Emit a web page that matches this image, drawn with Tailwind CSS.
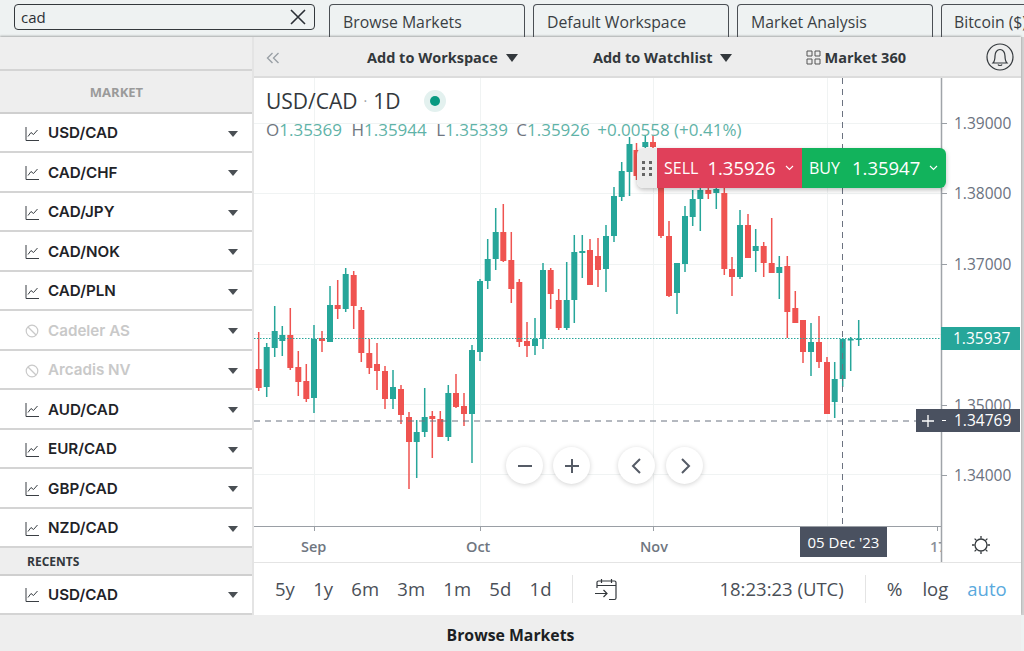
<!DOCTYPE html>
<html lang="en">

<head>
    <meta charset="UTF-8">
    <meta name="viewport" content="width=device-width, initial-scale=1.0">
    <title>Markets</title>
    <script src="https://cdn.jsdelivr.net/npm/@tailwindcss/browser@4"></script>
</head>

<body class="bg-[#eef2f2] font-['Open_Sans',sans-serif] text-[#2b2f36] w-[1024px] h-[651px] overflow-hidden">
    <!-- search + workspace tabs -->
    <div class="h-[37px] flex items-start pt-1 overflow-hidden">
        <div class="ml-[14px] w-[301px] h-[26px] border border-[#33383c] rounded flex items-center justify-between pl-[6px] pr-[7px] text-[15px] shrink-0">
            <span>cad</span>
            <svg width="18" height="18" viewBox="0 0 18 18" fill="none" stroke="#2b2f36" stroke-width="1.6"><path d="M2 2l14 14M16 2L2 16" /></svg>
        </div>
        <div class="ml-[14px] flex gap-2 shrink-0">
            <div class="w-[196px] h-[34px] border border-b-0 border-[#4a4f54] rounded-t-sm pl-[13px] pt-[7px] text-[15.8px] leading-[21px] text-[#3a3f44]">Browse Markets</div>
            <div class="w-[196px] h-[34px] border border-b-0 border-[#4a4f54] rounded-t-sm pl-[13px] pt-[7px] text-[15.8px] leading-[21px] text-[#3a3f44]">Default Workspace</div>
            <div class="w-[196px] h-[34px] border border-b-0 border-[#4a4f54] rounded-t-sm pl-[13px] pt-[7px] text-[15.8px] leading-[21px] text-[#3a3f44]">Market Analysis</div>
            <div class="w-[196px] h-[34px] border border-b-0 border-[#4a4f54] rounded-t-sm pl-[12px] pt-[7px] text-[15.8px] leading-[21px] text-[#3a3f44] whitespace-nowrap">Bitcoin ($)</div>
        </div>
    </div>

    <div class="w-[1021px] h-[578px] flex bg-white shadow-[0_-1px_2px_rgba(0,0,0,0.3),3px_0_0_#d2d2d2]">
        <!-- market list -->
        <aside class="w-[252px] shrink-0 flex flex-col">
            <div class="h-[34px] bg-[#eeeeee] border-b-2 border-[#d4d4d4]"></div>
            <div class="h-[43px] bg-[#eeeeee] border-b-2 border-[#cfcfcf] flex items-center justify-center pt-[3px] pr-[19px] text-[13px] font-bold text-[#9a9a9a]">MARKET</div>
            <div id="rows"></div>
            <div class="h-[28px] bg-[#eeeeee] border-b-2 border-[#cfcfcf] pl-[27px] pt-[2px] flex items-center text-[12px] font-bold text-[#33383c]">RECENTS</div>
            <div id="recent"></div>
        </aside>

        <main class="w-[769px] border-l-2 border-[#e4e4e4] flex flex-col">
            <!-- toolbar -->
            <div class="h-[41px] shrink-0 bg-[#ededed] border-b-2 border-[#dcdcdc] pt-[2px] flex items-center relative font-bold text-[14.5px] text-[#33383c]">
                <svg class="ml-[12px]" width="14" height="14" viewBox="0 0 14 14" fill="none" stroke="#9aa0a6" stroke-width="1.4"><path d="M6.5 2L1.5 7l5 5M12.5 2l-5 5 5 5" /></svg>
                <div class="ml-[87px] flex items-center gap-[8px]">Add to Workspace <span class="w-0 h-0 border-x-[6.5px] border-x-transparent border-t-[8px] border-t-[#33383c]"></span></div>
                <div class="ml-[75px] flex items-center gap-[8px]">Add to Watchlist <span class="w-0 h-0 border-x-[6.5px] border-x-transparent border-t-[8px] border-t-[#33383c]"></span></div>
                <div class="ml-[74px] flex items-center gap-[3px]">
                    <svg width="15" height="15" viewBox="0 0 15 15" fill="none" stroke="#555" stroke-width="1"><path d="M1 1h5v5H1zM9 1h5v5H9zM1 9h5v5H1zM9 9h5v5H9z" /></svg>
                    Market 360
                </div>
                <svg class="ml-[80px] -mt-[2px]" width="28" height="28" viewBox="0 0 28 28" fill="none" stroke="#33383c" stroke-width="1.2"><circle cx="14" cy="14" r="13" /><path d="M7 20c1.500-1.500 2-3.500 2-7 0-3.500 2-6.500 5-6.500s5 3 5 6.500c0 3.500.5 5.500 2 7zM12 21.500c.4 1.300 3.600 1.300 4 0" /></svg>
            </div>

            <!-- chart -->
            <div class="relative h-[485px] shrink-0 border-b border-[#e4e4e4] overflow-hidden">
                <svg id="chart" class="absolute inset-0" width="767" height="485" viewBox="254 78 767 485"></svg>

                <div class="absolute left-[12px] top-[9px] flex items-center text-[21px] leading-[28px] text-[#33383c]">
                    USD/CAD<span class="mx-[6px] text-[#9aa0a6] text-[14px]">·</span>1D
                    <span class="ml-[24px] w-[22px] h-[22px] rounded-full bg-[#e3f1ef] flex items-center justify-center"><span class="w-[10px] h-[10px] rounded-full bg-[#089981]"></span></span>
                </div>
                <div class="absolute left-[12px] top-[41px] text-[17px] leading-[22px] text-[#5fb3a8] whitespace-nowrap">
                    <span class="text-[#6f7680]">O</span>1.35369 <span class="ml-[5px] text-[#6f7680]">H</span>1.35944 <span class="ml-[5px] text-[#6f7680]">L</span>1.35339 <span class="ml-[4px] text-[#6f7680]">C</span>1.35926 <span class="ml-[3px]">+0.00558 (+0.41%)</span>
                </div>

                <!-- trade widget -->
                <div class="absolute left-[383px] top-[70px] h-[40px] w-[309px] flex rounded-md shadow-[0_2px_5px_rgba(0,0,0,0.25)] text-white overflow-hidden">
                    <div class="w-[20px] bg-[#ececec] flex items-center justify-center">
                        <svg width="10" height="16" viewBox="0 0 10 16" fill="#666"><rect x="0" y="1" width="3" height="3" /><rect x="7" y="1" width="3" height="3" /><rect x="0" y="7" width="3" height="3" /><rect x="7" y="7" width="3" height="3" /><rect x="0" y="13" width="3" height="3" /><rect x="7" y="13" width="3" height="3" /></svg>
                    </div>
                    <div class="w-[145px] bg-[#e0405a] flex items-center pl-[7px] whitespace-nowrap">
                        <span class="text-[16px]">SELL</span><span class="ml-[9px] text-[18.5px]">1.35926</span>
                        <svg class="ml-[9px]" width="9" height="6" viewBox="0 0 9 6" fill="none" stroke="#fff" stroke-width="1.1"><path d="M1 1l3.500 3.500L8 1" /></svg>
                    </div>
                    <div class="w-[144px] bg-[#12b35c] flex items-center pl-[7px] whitespace-nowrap">
                        <span class="text-[16px]">BUY</span><span class="ml-[12px] text-[18.5px]">1.35947</span>
                        <svg class="ml-[9px]" width="9" height="6" viewBox="0 0 9 6" fill="none" stroke="#fff" stroke-width="1.1"><path d="M1 1l3.500 3.500L8 1" /></svg>
                    </div>
                </div>

                <!-- price axis tags -->
                <div class="absolute left-[687px] top-[249px] w-[79px] h-[23px] bg-[#26a69a] text-white text-[15.5px] leading-[23px] pl-[12px]">1.35937</div>
                <div class="absolute left-[662px] top-[331px] w-[104px] h-[23px] bg-[#4a5160] text-white text-[15.5px] leading-[23px] flex items-center">
                    <svg class="ml-[6px]" width="12" height="12" viewBox="0 0 12 12" stroke="#fff" stroke-width="1.3"><path d="M6 0v12M0 6h12" /></svg>
                    <span class="ml-[8px] w-[4px] h-px bg-white"></span>
                    <span class="ml-[8px]">1.34769</span>
                </div>

                <!-- zoom / pan -->
                <div class="absolute left-[252px] top-[369px] flex">
                    <button class="w-[37px] h-[37px] rounded-full bg-white shadow-[0_1px_5px_rgba(0,0,0,0.18)] flex items-center justify-center"><svg width="16" height="16" viewBox="0 0 16 16" stroke="#555b66" stroke-width="2"><path d="M1 8h14" /></svg></button>
                    <button class="ml-[10px] w-[37px] h-[37px] rounded-full bg-white shadow-[0_1px_5px_rgba(0,0,0,0.18)] flex items-center justify-center"><svg width="16" height="16" viewBox="0 0 16 16" stroke="#555b66" stroke-width="2"><path d="M1 8h14M8 1v14" /></svg></button>
                    <button class="ml-[28px] w-[37px] h-[37px] rounded-full bg-white shadow-[0_1px_5px_rgba(0,0,0,0.18)] flex items-center justify-center"><svg width="12" height="16" viewBox="0 0 12 16" fill="none" stroke="#555b66" stroke-width="2"><path d="M9 1L2 8l7 7" /></svg></button>
                    <button class="ml-[11px] w-[37px] h-[37px] rounded-full bg-white shadow-[0_1px_5px_rgba(0,0,0,0.18)] flex items-center justify-center"><svg width="12" height="16" viewBox="0 0 12 16" fill="none" stroke="#555b66" stroke-width="2"><path d="M3 1l7 7-7 7" /></svg></button>
                </div>

                <!-- time axis -->
                <span class="absolute left-[47px] top-[459px] text-[14.5px] leading-[20px] font-semibold text-[#6f7680]">Sep</span>
                <span class="absolute left-[212px] top-[459px] text-[14.5px] leading-[20px] font-semibold text-[#6f7680]">Oct</span>
                <span class="absolute left-[386px] top-[459px] text-[14.5px] leading-[20px] font-semibold text-[#6f7680]">Nov</span>
                <div class="absolute left-[546px] top-[449px] w-[87px] h-[30px] bg-[#4a5160] text-white text-[15px] leading-[30px] text-center whitespace-nowrap">05 Dec '23</div>
                <span class="absolute left-[676px] top-[459px] w-[11px] overflow-hidden text-[14.5px] leading-[20px] font-semibold text-[#8a9099]">17</span>
                <svg class="absolute left-[717px] top-[457px]" width="20" height="20" viewBox="0 0 20 20" fill="none" stroke="#33383c" stroke-width="1.3"><circle cx="10" cy="10" r="6" /><path d="M10 1v2.500M10 16.500V19M1 10h2.500M16.500 10H19M3.600 3.600l1.800 1.800M14.600 14.600l1.800 1.800M16.400 3.600l-1.800 1.800M5.400 14.600l-1.800 1.800" /></svg>
            </div>

            <!-- range bar -->
            <div class="flex-1 flex items-center text-[18.5px] text-[#4a4f57] whitespace-nowrap">
                <div class="ml-[21px] flex gap-[18.3px]"><span>5y</span><span>1y</span><span>6m</span><span>3m</span><span>1m</span><span>5d</span><span>1d</span></div>
                <span class="ml-[21px] w-px h-[28px] bg-[#e4e4e4]"></span>
                <svg class="ml-[21px]" width="24" height="24" viewBox="0 0 24 24" fill="none" stroke="#33383c" stroke-width="1.2"><path d="M3 11V5.500A1.500 1.500 0 0 1 4.500 4h16A1.500 1.500 0 0 1 22 5.500V21a1.500 1.500 0 0 1-1.500 1.500H15M3 8.500h19M7.500 2v4M17.500 2v4M1 16.500h12M9.500 13l3.500 3.500L9.500 20" /></svg>
                <span class="ml-[101px]">18:23:23 (UTC)</span>
                <span class="ml-[21px] w-px h-[28px] bg-[#e4e4e4]"></span>
                <span class="ml-[21px] text-[19px]">%</span>
                <span class="ml-[20px]">log</span>
                <span class="ml-[19px] text-[#5aa9dd]">auto</span>
            </div>
        </main>
    </div>

    <div class="w-[1021px] h-[36px] bg-[#eeeeee] pt-[5px] flex items-center justify-center text-[15.8px] font-bold text-[#1c1f24]">Browse Markets</div>

    <script>
        // market rows
        const line = '<svg width="14" height="14" viewBox="0 0 14 14" fill="none" stroke="#3a3f44" stroke-width="1"><path d="M1 0v13.500h13M3 9.500l3-4 2.500 2L12.500 3"/></svg>';
        const blocked = '<svg width="14" height="14" viewBox="0 0 14 14" fill="none" stroke="#c9c9c9" stroke-width="1.2"><circle cx="7" cy="7" r="5.800"/><path d="M3 3l8 8"/></svg>';
        function rowHtml(name, off, h, top) {
            return `<div class="flex items-center border-b-2 border-[#d4d4d4] pl-[25px] pr-[14px] font-['Inter',sans-serif] font-semibold text-[15.2px] ${off ? 'text-[#c9c9c9]' : 'text-[#1f2328]'}" style="height:${h}px;padding-top:${top}px">
                ${off ? blocked : line}
                <span class="ml-[9px] flex-1">${name}</span>
                <span class="w-0 h-0 border-x-[5px] border-x-transparent border-t-[6px] border-t-[#4a4f54]"></span>
            </div>`;
        }
        const names = ['USD/CAD', 'CAD/CHF', 'CAD/JPY', 'CAD/NOK', 'CAD/PLN', 'Cadeler AS', 'Arcadis NV', 'AUD/CAD', 'EUR/CAD', 'GBP/CAD', 'NZD/CAD'];
        document.getElementById('rows').innerHTML = names.map((n, i) => rowHtml(n, i === 5 || i === 6, 39.5, 3)).join('');
        document.getElementById('recent').innerHTML = rowHtml('USD/CAD', false, 39, 1);

        // x, wickTop, bodyTop, bodyBottom, wickBottom, up
        const candles = [
            [258.7,332,369,388,391,0],[266.7,343,347,387,397,1],[274.7,306,331,348,357,1],[282.3,326,335,341,356,1],
            [290.3,308,335,368,370,0],[298.3,351,367,382,396,0],[306.3,364,381,399,402,0],[314,325,339,398,413,1],
            [322,331,338,341,352,0],[330,286,305,342,342,1],[337.7,280,305,309,319,0],[345.7,268,274,309,312,1],
            [353.7,271,275,306,329,0],[361.3,307,310,353,362,0],[369.3,339,353,368,374,0],[377,343,364,371,390,0],
            [385,366,371,399,409,0],[393,370,387,399,409,1],[401,385,389,415,424,0],[409,412,417,442,489,0],
            [416.7,420,432,442,478,1],[424.7,388,417,432,437,1],[432.3,411,416,419,458,0],[440.3,411,419,437,437,0],
            [448.3,385,393,437,441,1],[456,374,393,407,408,0],[464,393,406,414,426,0],[472,345,350,414,463,1],
            [480,279,281,352,361,1],[487.7,239,259,281,289,1],[495.7,208,232,259,270,1],[503.3,204,232,261,262,0],
            [511.3,232,260,289,303,0],[519.3,279,282,342,347,0],[527,322,341,346,357,0],[535,318,339,346,355,1],
            [543,263,270,339,349,1],[550.7,268,270,294,309,0],[558.7,289,300,328,330,0],[566.7,262,300,328,330,1],
            [574.3,235,252,300,323,1],[582.3,235,251,253,278,1],[590,239,250,285,285,0],[598,238,256,270,287,0],
            [606,225,236,269,292,1],[614,187,196,236,242,1],[621.7,162,171,197,201,1],[629.5,137,144,172,196,1],
            [636.5,143,150,176,180,0],[645.3,135,142,147,150,1],[653,135,142,147,150,0],[661,150,155,236,238,0],
            [669,221,236,296,297,0],[677,263,263,293,314,1],[685,206,216,264,272,1],[692.7,190,199,217,226,1],
            [700.3,178,190,199,231,1],[708.3,178,190,194,199,0],[716.3,178,189,193,209,1],[724.3,178,193,269,275,0],
            [732,257,269,277,296,0],[740,210,225,277,279,1],[748,214,225,258,258,0],[755.7,229,246,251,272,1],
            [763.7,242,246,263,277,0],[771.7,218,263,273,273,0],[779.3,256,267,273,299,1],[787.3,256,266,312,338,0],
            [795.3,291,308,323,323,0],[803,320,320,352,363,0],[811,323,342,352,376,1],[819,316,342,362,368,0],
            [827,357,362,414,414,0],[834.7,362,379,402,418,1],[842.7,338,339,379,387,1],[850.7,337,339,340,371,1],
            [858.7,320,338.5,339.5,346,1]
        ];
        let s = '';
        // grid
        for (const y of [123, 193, 264, 334, 404, 474]) s += `<path d="M254 ${y + .5}H941" stroke="#f0f3f3"/>`;
        for (const x of [314, 480, 653, 827]) s += `<path d="M${x + .5} 78V526" stroke="#f0f3f3"/>`;
        // candles
        for (const [x, wt, bt, bb, wb, up] of candles) {
            const c = up ? '#26a69a' : '#ef5350';
            s += `<rect x="${x - .75}" y="${wt}" width="1.5" height="${wb - wt}" fill="${c}"/>`;
            s += `<rect x="${x - 3}" y="${bt}" width="6" height="${Math.max(bb - bt, 1.5)}" fill="${c}"/>`;
        }
        // last price + crosshair
        s += '<path d="M254 338.5H941" stroke="#26a69a" stroke-dasharray="1.5 1.5"/>';
        s += '<path d="M254 421H941" stroke="#6b7280" stroke-dasharray="6 5"/>';
        s += '<path d="M842.5 78V526" stroke="#6b7280" stroke-dasharray="6 5"/>';
        // axes
        s += '<path d="M254 526.5H941" stroke="#9a9fa5"/><path d="M941.5 78V563" stroke="#a0a4a9" stroke-width="1.5"/>';
        for (const x of [314, 480, 653, 827, 937]) s += `<path d="M${x + .5} 526V531" stroke="#9a9fa5"/>`;
        // price labels
        const prices = [['1.39000', 123], ['1.38000', 193], ['1.37000', 264], ['1.35000', 405], ['1.34000', 475]];
        for (const [p, y] of prices) {
            s += `<path d="M941 ${y + .5}H947" stroke="#9a9fa5"/>`;
            s += `<text x="954" y="${y + 6}" font-size="15.5" fill="#6b7280" font-family="Open Sans">${p}</text>`;
        }
        document.getElementById('chart').innerHTML = s;
    </script>
</body>

</html>
